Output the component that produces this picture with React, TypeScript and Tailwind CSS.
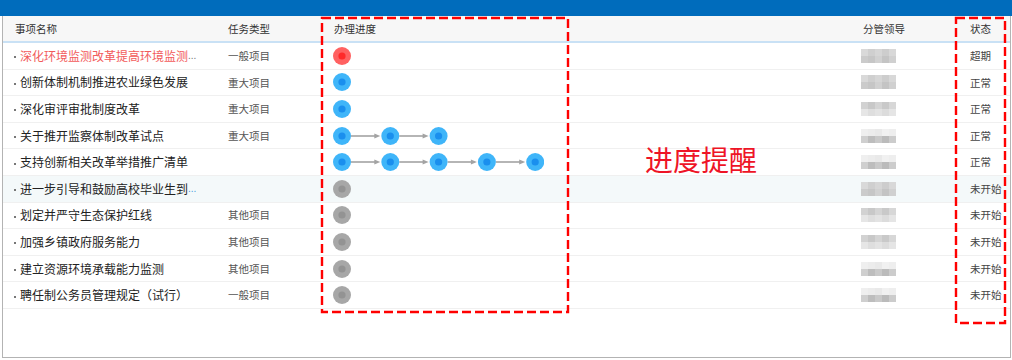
import React from 'react'

type Tone = 'red' | 'blue' | 'gray'

type Task = {
  name: string
  more?: 'gray' | 'blue'
  overdue?: boolean
  kind: string
  steps: number
  tone: Tone
  status: string
  highlight?: boolean
  leader: string[]
}

// blurred leader names: 5 x 2 mosaic blocks each
const mosaicA = ['bg-[#d9d9d9]', 'bg-[#cfcfcf]', 'bg-[#d6d6d6]', 'bg-[#cdcdcd]', 'bg-[#d8d8d8]', 'bg-[#cbcbcb]', 'bg-[#c6c6c6]', 'bg-[#d1d1d1]', 'bg-[#c4c4c4]', 'bg-[#d0d0d0]']
const mosaicB = ['bg-[#d2d2d2]', 'bg-[#c8c8c8]', 'bg-[#d4d4d4]', 'bg-[#c9c9c9]', 'bg-[#d7d7d7]', 'bg-[#e6e6e6]', 'bg-[#dedede]', 'bg-[#e3e3e3]', 'bg-[#dcdcdc]', 'bg-[#e5e5e5]']
const mosaicC = ['bg-[#efefef]', 'bg-[#ececec]', 'bg-[#e9e9e9]', 'bg-[#f1f1f1]', 'bg-[#eeeeee]', 'bg-[#cfcfcf]', 'bg-[#bdbdbd]', 'bg-[#c9c9c9]', 'bg-[#bbbbbb]', 'bg-[#cccccc]']

const tasks: Task[] = [
  { name: '深化环境监测改革提高环境监测', more: 'gray', overdue: true, kind: '一般项目', steps: 1, tone: 'red', status: '超期', leader: mosaicA },
  { name: '创新体制机制推进农业绿色发展', kind: '重大项目', steps: 1, tone: 'blue', status: '正常', leader: mosaicA },
  { name: '深化审评审批制度改革', kind: '重大项目', steps: 1, tone: 'blue', status: '正常', leader: mosaicB },
  { name: '关于推开监察体制改革试点', kind: '重大项目', steps: 3, tone: 'blue', status: '正常', leader: mosaicC },
  { name: '支持创新相关改革举措推广清单', kind: '', steps: 5, tone: 'blue', status: '正常', leader: mosaicC },
  { name: '进一步引导和鼓励高校毕业生到', more: 'blue', kind: '', steps: 1, tone: 'gray', status: '未开始', highlight: true, leader: mosaicA },
  { name: '划定并严守生态保护红线', kind: '其他项目', steps: 1, tone: 'gray', status: '未开始', leader: mosaicB },
  { name: '加强乡镇政府服务能力', kind: '其他项目', steps: 1, tone: 'gray', status: '未开始', leader: mosaicB },
  { name: '建立资源环境承载能力监测', kind: '其他项目', steps: 1, tone: 'gray', status: '未开始', leader: mosaicC },
  { name: '聘任制公务员管理规定（试行）', kind: '一般项目', steps: 1, tone: 'gray', status: '未开始', leader: mosaicC },
]

const toneColors: Record<Tone, [string, string]> = {
  red: ['#ff6161', '#ff2a2a'],
  blue: ['#3fb5f9', '#1a8fee'],
  gray: ['#a7a7a7', '#939393'],
}

const STEP = 48.3

function ProgressTrack({ steps, tone }: { steps: number; tone: Tone }) {
  const [outer, inner] = toneColors[tone]
  const width = 18 + (steps - 1) * STEP
  return (
    <svg width={width} height={18} viewBox={`0 0 ${width} 18`} className="block">
      {Array.from({ length: steps - 1 }).map((_, i) => {
        const from = 9 + i * STEP + 9
        const to = 9 + (i + 1) * STEP - 9
        return (
          <g key={i}>
            <line x1={from} y1={9} x2={to - 4} y2={9} stroke="#a3a3a3" strokeWidth={1.6} />
            <polygon points={`${to - 7},6.4 ${to - 1},9 ${to - 7},11.6`} fill="#a3a3a3" />
          </g>
        )
      })}
      {Array.from({ length: steps }).map((_, i) => (
        <g key={i}>
          <circle cx={9 + i * STEP} cy={9} r={9} fill={outer} />
          <circle cx={9 + i * STEP} cy={9} r={3.6} fill={inner} />
        </g>
      ))}
    </svg>
  )
}

function Mosaic({ cells }: { cells: string[] }) {
  return (
    <div className="grid w-[35px] grid-cols-5">
      {cells.map((c, i) => (
        <div key={i} className={`h-[7px] w-[7px] ${c}`} />
      ))}
    </div>
  )
}

export default function App() {
  return (
    <div
      className="relative flex h-[360px] w-[1012px] flex-col overflow-hidden bg-white"
      style={{ fontFamily: '"Noto Sans CJK SC", "Noto Sans", sans-serif' }}
    >
      <div className="h-[16px] shrink-0 bg-[#006cbc]" />

      <div className="mb-[2px] ml-[2px] mr-[1px] flex-1 border-x border-b border-[#b3b3b3]">
        {/* header */}
        <div className="flex h-[27px] items-center border-b-2 border-[#c9e1f5] bg-[#f7f7f7] text-[10.5px] text-[#333]">
          <div className="w-[219px] pl-[12px]">事项名称</div>
          <div className="w-[100px] pl-[6px]">任务类型</div>
          <div className="w-[528px] pl-[12px]">办理进度</div>
          <div className="w-[106px] pl-[13px]">分管领导</div>
          <div className="flex-1 pl-[14px]">状态</div>
        </div>

        {tasks.map((t) => (
          <div
            key={t.name}
            className={`flex h-[26.6px] items-center border-b border-[#f0f0f0] ${t.highlight ? 'bg-[#f4f9fa]' : ''}`}
          >
            <div className="flex w-[219px] items-center whitespace-nowrap pl-[11px]">
              <span className="mr-[4px] mt-[3px] h-[2px] w-[2px] bg-[#777]" />
              <span className={`text-[12px] ${t.overdue ? 'text-[#f25b5b]' : 'text-[#222]'}`}>{t.name}</span>
              {t.more ? (
                <span
                  className={`text-[10px] ${t.more === 'blue' ? 'text-[#4a9ee0]' : 'text-[#777]'}`}
                  style={{ fontFamily: '"Liberation Sans", sans-serif' }}
                >
                  ...
                </span>
              ) : null}
            </div>
            <div className="w-[100px] pl-[6px] text-[10.5px] text-[#555]">{t.kind}</div>
            <div className="w-[528px] pl-[11px]">
              <ProgressTrack steps={t.steps} tone={t.tone} />
            </div>
            <div className="w-[106px] pl-[11px]">
              <Mosaic cells={t.leader} />
            </div>
            <div className="flex-1 pl-[14px] text-[10.5px] text-[#444]">{t.status}</div>
          </div>
        ))}
      </div>

      {/* highlight frames */}
      <svg className="pointer-events-none absolute left-0 top-0" width={1012} height={360}>
        <rect x={322} y={18} width={246} height={294} fill="none" stroke="#ff0000" strokeWidth={2.4} strokeDasharray="9 4" />
        <rect x={956} y={18} width={49} height={305} fill="none" stroke="#ff0000" strokeWidth={2.4} strokeDasharray="9 4" />
      </svg>

      <div className="absolute left-[645px] top-[145px] text-[28px] leading-none text-[#ee1426]">进度提醒</div>
    </div>
  )
}
